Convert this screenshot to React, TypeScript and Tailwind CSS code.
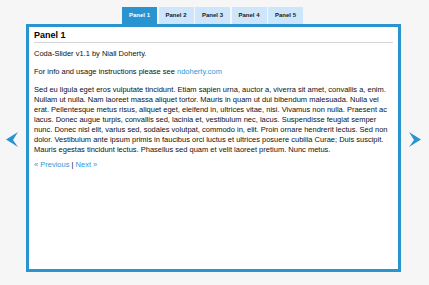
export default function App() {
  const tabs = ["Panel 1", "Panel 2", "Panel 3", "Panel 4", "Panel 5"];
  const lines = [
    "Sed eu ligula eget eros vulputate tincidunt. Etiam sapien urna, auctor a, viverra sit amet, convallis a, enim.",
    "Nullam ut nulla. Nam laoreet massa aliquet tortor. Mauris in quam ut dui bibendum malesuada. Nulla vel",
    "erat. Pellentesque metus risus, aliquet eget, eleifend in, ultrices vitae, nisi. Vivamus non nulla. Praesent ac",
    "lacus. Donec augue turpis, convallis sed, lacinia et, vestibulum nec, lacus. Suspendisse feugiat semper",
    "nunc. Donec nisl elit, varius sed, sodales volutpat, commodo in, elit. Proin ornare hendrerit lectus. Sed non",
    "dolor. Vestibulum ante ipsum primis in faucibus orci luctus et ultrices posuere cubilia Curae; Duis suscipit.",
    "Mauris egestas tincidunt lectus. Phasellus sed quam et velit laoreet pretium. Nunc metus.",
  ];

  return (
    <div
      className="w-[429px] h-[285px] bg-[#f6f6f6] pt-[7px] overflow-hidden"
      style={{ fontFamily: "'Liberation Sans', Arial, sans-serif" }}
    >
      {/* Tabs */}
      <div className="flex ml-[122px] gap-[1.5px]">
        {tabs.map((t, i) => (
          <div
            key={t}
            className={`w-[35px] h-[17px] flex items-center justify-center text-[6px] font-bold ${
              i === 0 ? "bg-[#2a94d1] text-white" : "bg-[#cde6fb] text-[#1a1a1a]"
            }`}
          >
            {t}
          </div>
        ))}
      </div>

      <div className="flex">
        {/* Left arrow */}
        <div className="w-[26px] pl-[6px] pt-[108px]">
          <svg width="13" height="15" viewBox="0 0 13 15">
            <polygon points="0,7.5 12,0 7,8 12,15" fill="#2a94d1" />
          </svg>
        </div>

        {/* Panel */}
        <div className="w-[375px] h-[248px] border-[3px] border-[#2a94d1] bg-white px-[5px] pt-[2px]">
          <h2 className="text-[9px] font-bold leading-[13px] text-black border-b border-[#d6d6d6]">
            Panel 1
          </h2>
          <div className="text-[7.5px] leading-[10px] text-[#111]">
            <p className="mt-[6px] whitespace-nowrap">Coda-Slider v1.1 by Niall Doherty.</p>
            <p className="mt-[8px] whitespace-nowrap">
              For info and usage instructions please see{" "}
              <span className="text-[#2b9ad8]">ndoherty.com</span>
            </p>
            <p className="mt-[8px] whitespace-nowrap">
              {lines.map((l) => (
                <span key={l} className="block">
                  {l}
                </span>
              ))}
            </p>
            <p className="mt-[5px] whitespace-nowrap">
              <span className="text-[#2b9ad8]">« Previous</span> |{" "}
              <span className="text-[#2b9ad8]">Next »</span>
            </p>
          </div>
        </div>

        {/* Right arrow */}
        <div className="w-[28px] pl-[7px] pt-[108px]">
          <svg width="13" height="15" viewBox="0 0 13 15">
            <polygon points="13,7.5 1,0 6,8 1,15" fill="#2a94d1" />
          </svg>
        </div>
      </div>
    </div>
  );
}
